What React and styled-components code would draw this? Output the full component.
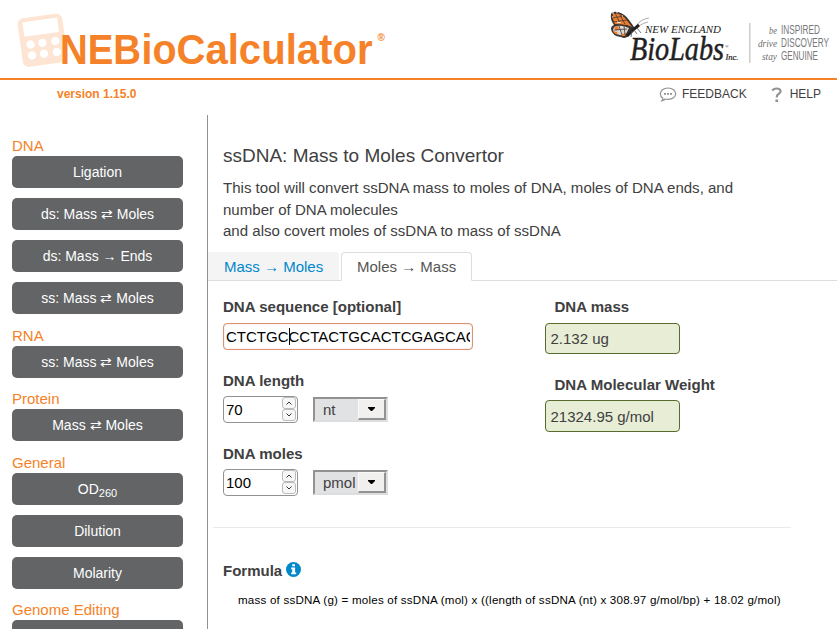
import React from "react";
import styled, { createGlobalStyle, css } from "styled-components";

const Global = createGlobalStyle`
  * { box-sizing: border-box; }
  html, body { margin: 0; background: #fff; overflow: hidden; }
  body { font-family: "Liberation Sans", Arial, sans-serif; font-size: 15px; color: #404041; }
`;
const Page = styled.div`
  width: 837px;
  height: 629px;
  overflow: hidden;
`;
const Header = styled.header`
  height: 80px;
  border-bottom: 2px solid #f58229;
  display: flex;
  justify-content: space-between;
`;
const Art = styled.svg`
  display: block;
  flex: none;
`;
const MetaBar = styled.div`
  height: 35px;
  display: flex;
  align-items: flex-start;
  padding: 6px 16px 0 57px;
`;
const Version = styled.div`
  font: bold 12px/16px "Liberation Sans", Arial, sans-serif;
  color: #f58229;
  margin-right: auto;
`;
const MetaLink = styled.a`
  display: flex;
  align-items: center;
  gap: ${(p) => p.$gap}px;
  margin-left: ${(p) => p.$before || 0}px;
  font-size: 12px;
  line-height: 17px;
  color: #404041;
`;
const Body = styled.div`
  display: flex;
  height: 514px;
`;
const Sidebar = styled.nav`
  width: 208px;
  flex: none;
  border-right: 1px solid #919191;
  padding: 21px 0 0 12px;
  overflow: hidden;
`;
const Group = styled.section`
  width: 171px;
  margin-bottom: ${(p) => p.$after}px;
`;
const GroupTitle = styled.div`
  height: 20px;
  line-height: 20px;
  font-size: 15px;
  color: #f58229;
`;
const Buttons = styled.div`
  display: grid;
  gap: 10px;
`;
const NavButton = styled.a`
  height: 32px;
  border-radius: 5px;
  background: #626466;
  color: #fff;
  font-size: 14px;
  line-height: 32px;
  text-align: center;
  sub { font-size: 11px; line-height: 0; vertical-align: -3px; }
`;
const Main = styled.main`
  flex: 1;
  min-width: 0;
`;
const Title = styled.h1`
  margin: 30px 0 0 15px;
  font-size: 19px;
  line-height: 22px;
  font-weight: normal;
`;
const Intro = styled.p`
  margin: 10px 0 10px 15px;
  font-size: 15.05px;
  line-height: 21.5px;
`;
const Tabs = styled.div`
  height: 29px;
  display: flex;
  border-bottom: 1px solid #ddd;
`;
const Tab = styled.div`
  height: 29px;
  line-height: 29px;
  font-size: 15px;
  white-space: nowrap;
  ${(p) =>
    p.$active
      ? css`
          width: 131px;
          line-height: 27px;
          padding-left: 15px;
          margin-left: 2px;
          border: 1px solid #ddd;
          border-bottom-color: #fff;
          border-radius: 4px 4px 0 0;
          background: #fff;
          color: #555;
        `
      : css`
          width: 131px;
          height: 28px;
          padding-left: 16px;
          border-radius: 0 4px 0 0;
          background: #f4f4f4;
          color: #0088cc;
        `}
`;
const Form = styled.div`
  display: grid;
  grid-template-columns: 322px 200px;
  padding: 16px 0 0 15px;
  height: 246px;
`;
const Label = styled.div`
  height: 20px;
  line-height: 20px;
  font-size: 15.04px;
  font-weight: bold;
  margin-left: ${(p) => p.$indent || 0}px;
`;
const SequenceBox = styled.div`
  width: 250px;
  height: 27px;
  margin: 6px 0 21px;
  padding: 0 2px;
  border: 1px solid #df8f72;
  border-radius: 4px;
  box-shadow: inset 0 0 1px #df8f72;
`;
const SequenceText = styled.div`
  display: flex;
  align-items: center;
  height: 25px;
  font-size: 15px;
  color: #000;
  white-space: nowrap;
  overflow: hidden;
`;
const Caret = styled.i`
  flex: none;
  width: 1px;
  height: 17px;
  margin-right: -1px;
  background: #000;
`;
const FieldRow = styled.div`
  display: flex;
  align-items: center;
  gap: 15px;
  height: 27px;
  margin: 5px 0 21px;
`;
const NumberBox = styled.div`
  width: 75px;
  height: 27px;
  border: 1px solid #929292;
  border-radius: 4px;
  display: flex;
  align-items: center;
  justify-content: space-between;
  padding: 0 1px 0 2px;
  font-size: 15px;
  color: #000;
`;
const Spinner = styled.div`
  display: grid;
`;
const Step = styled.div`
  width: 14px;
  height: 12px;
  border: 1px solid #bbb;
  border-radius: 3px;
  background: #f7f7f7;
  display: grid;
  place-items: center;
`;
const Select = styled.div`
  width: 75px;
  height: 25px;
  border: 2px solid;
  border-color: #929292 #dedede #dedede #929292;
  background: #e0e2e4;
  display: flex;
  justify-content: space-between;
  padding-left: 8px;
  font-size: 15px;
  line-height: 22px;
`;
const SelectArrow = styled.div`
  width: 28px;
  height: 21px;
  border: 1px solid;
  border-color: #f9f9f9 #929292 #929292 #f9f9f9;
  border-right-width: 2px;
  border-bottom-width: 2px;
  background: #f1f0ef;
  display: grid;
  place-items: center;
`;
const Result = styled.div`
  width: 135px;
  height: ${(p) => p.$h}px;
  margin: ${(p) => p.$m};
  border: 1px solid #586b2c;
  border-radius: 4px;
  background: #e7eed5;
  padding: 0 4.500px;
  font-size: 15px;
  line-height: ${(p) => p.$line}px;
`;
const Rule = styled.div`
  height: 1px;
  width: 578px;
  margin-left: 5px;
  background: #eaeaea;
`;
const FormulaTitle = styled.div`
  display: flex;
  align-items: center;
  gap: 4px;
  height: 20px;
  margin: 33px 0 0 15px;
  font-weight: bold;
  font-size: 15px;
`;
const InfoIcon = styled(Art)`
  margin-bottom: 3px;
`;
const FormulaText = styled.div`
  margin: 11px 0 0 30px;
  font-size: 11.6px;
  line-height: 15px;
  letter-spacing: 0.205px;
  color: #000;
  white-space: nowrap;
`;

const CalculatorLogo = () => (
  <Art width="400" height="78" viewBox="0 0 400 78">
    <g transform="rotate(-8 41 40)">
      <rect x="20" y="16" width="45" height="49" rx="6" fill="#fde4d3" />
      <rect x="25" y="20" width="35" height="14.500" fill="#fff" />
      {[43, 54].map((y) =>
        [30, 42, 55].map((x) => <circle key={`${x}-${y}`} cx={x} cy={y} r="4.2" fill="#fff" />)
      )}
    </g>
    <g fontFamily="Liberation Sans, Arial, sans-serif" fontSize="43" fontWeight="bold" fill="#f58229">
      <text x="60" y="64" textLength="81" lengthAdjust="spacingAndGlyphs">NEB</text>
      <text x="141.500" y="64" textLength="35" lengthAdjust="spacingAndGlyphs">io</text>
      <text x="176.500" y="64" textLength="196" lengthAdjust="spacingAndGlyphs">Calculator</text>
    </g>
    <text x="377.500" y="40.500" fontFamily="Liberation Sans, Arial, sans-serif" fontSize="10" fontWeight="bold" fill="#f58229">®</text>
  </Art>
);

const LabsLogo = () => (
  <Art width="237" height="78" viewBox="0 0 237 78">
    <path d="M37 25Q41 19 49 18M39 26Q43 23 48 22" fill="none" stroke="#888" strokeWidth=".7" />
    <path d="M11 14Q12 11 18 12Q25 14 29 20Q33 25 35 29L30 33Q27 40 21 37Q12 36 11 29Q11 26 14 25Q10 20 11 14Z" fill="#3a3431" />
    <path d="M13 14Q19 12 25 18L32 27L27 25Q20 24 15 24Q12 19 13 14Z" fill="#ee7d2d" />
    <path d="M14 27Q20 24 29 28L27 32Q25 36 20 35Q14 34 13 30Z" fill="#ddd8d3" />
    <path d="M14 27l4-1 1 3-3 2zM13 31l4 1 1 3-4-2zM22 34l4-1-1 3h-3z" fill="#ee7d2d" />
    <path d="M15 13l6 12M20 15l5 9M12 18l12-2M13 22l14-2M19 26l3 9M14 30l13-1M24 26l1 9" fill="none" stroke="#433a34" strokeWidth=".8" />
    <path d="M12 13h2M12 17h1M16 12h2M22 16h1M17 22l4 1" stroke="#fff" strokeWidth="1" />
    <path d="M27 36Q30 33 34 29L39 25" fill="none" stroke="#222" strokeWidth="3" />
    <path d="M34 30l3 4M37 28l4 5M32 31l-1 6" fill="none" stroke="#555" strokeWidth=".8" />
    <g fill="#222" fontFamily="Liberation Serif, Times New Roman, serif" fontStyle="italic">
      <text x="45" y="33" fontSize="10.500" textLength="76" lengthAdjust="spacingAndGlyphs">NEW ENGLAND</text>
      <text x="30" y="60" fontSize="34.500" stroke="#222" strokeWidth=".5" textLength="94" lengthAdjust="spacingAndGlyphs">BioLabs</text>
      <text x="125.500" y="60" fontSize="9" stroke="#222" strokeWidth=".2" textLength="13" lengthAdjust="spacingAndGlyphs">Inc.</text>
      <text x="125" y="48" fontSize="5">®</text>
    </g>
    <rect x="149" y="23" width="1.500" height="40" fill="#ccc" />
    <g fill="#6d6e70" fontFamily="Liberation Serif, Times New Roman, serif" fontSize="10.500" fontStyle="italic">
      <text x="169" y="34" textLength="8" lengthAdjust="spacingAndGlyphs">be</text>
      <text x="158" y="47" textLength="19" lengthAdjust="spacingAndGlyphs">drive</text>
      <text x="162" y="60" textLength="15" lengthAdjust="spacingAndGlyphs">stay</text>
    </g>
    <g fill="#77787a" fontFamily="Liberation Sans, Arial, sans-serif" fontSize="12">
      <text x="181" y="34" textLength="39" lengthAdjust="spacingAndGlyphs">INSPIRED</text>
      <text x="181" y="47" textLength="48" lengthAdjust="spacingAndGlyphs">DISCOVERY</text>
      <text x="181" y="60" textLength="37" lengthAdjust="spacingAndGlyphs">GENUINE</text>
    </g>
  </Art>
);

const groups = [
  { title: "DNA", after: 12, items: ["Ligation", "ds: Mass ⇄ Moles", "ds: Mass → Ends", "ss: Mass ⇄ Moles"] },
  { title: "RNA", after: 11, items: ["ss: Mass ⇄ Moles"] },
  { title: "Protein", after: 12, items: ["Mass ⇄ Moles"] },
  { title: "General", after: 11, items: [<>OD<sub>260</sub></>, "Dilution", "Molarity"] },
  { title: "Genome Editing", after: 0, items: [""] },
];

const NumberField = ({ value, unit }) => (
  <FieldRow>
    <NumberBox>
      {value}
      <Spinner>
        <Step><Art width="8" height="6"><path d="M1.500 4.500L4 2l2.500 2.500" fill="none" stroke="#333" /></Art></Step>
        <Step><Art width="8" height="6"><path d="M1.500 1.500L4 4l2.500-2.500" fill="none" stroke="#333" /></Art></Step>
      </Spinner>
    </NumberBox>
    <Select>
      {unit}
      <SelectArrow><Art width="7" height="4"><path d="M0 0h7v1L4 4H3L0 1Z" fill="#000" /></Art></SelectArrow>
    </Select>
  </FieldRow>
);

export default function App() {
  return (
    <Page>
      <Global />
      <Header>
        <CalculatorLogo />
        <LabsLogo />
      </Header>
      <MetaBar>
        <Version>version 1.15.0</Version>
        <MetaLink $gap={5}>
          <Art width="18" height="17" viewBox="0 0 18 17">
            <path d="M9 2C4.500 2 1.300 4.500 1.300 7.800c0 1.800 1 3.400 2.600 4.400-.1 1-.5 1.800-1.100 2.700 1.500-.3 2.600-.9 3.500-1.900.8.200 1.700.3 2.700.3 4.600 0 7.700-2.400 7.700-5.500S13.600 2 9 2Z" fill="none" stroke="#919395" strokeWidth="1.200" />
            <path d="M5 7h2v1.700H5zM8 7h2v1.700H8zM11 7h2v1.700h-2z" fill="#919395" />
          </Art>
          FEEDBACK
        </MetaLink>
        <MetaLink $gap={8} $before={24}>
          <Art width="11" height="17" viewBox="0 0 11 17">
            <path d="M1.200 4.500Q3 2.500 5.500 2.500C10.500 2.500 10.500 6.500 7.500 8Q5.700 9 5.700 11.500" fill="none" stroke="#919395" strokeWidth="2.200" />
            <rect x="4.400" y="13.500" width="2.700" height="2.500" fill="#919395" />
          </Art>
          HELP
        </MetaLink>
      </MetaBar>
      <Body>
        <Sidebar>
          {groups.map((g) => (
            <Group key={g.title} $after={g.after}>
              <GroupTitle>{g.title}</GroupTitle>
              <Buttons>{g.items.map((t, i) => <NavButton key={i}>{t}</NavButton>)}</Buttons>
            </Group>
          ))}
        </Sidebar>
        <Main>
          <Title>ssDNA: Mass to Moles Convertor</Title>
          <Intro>
            This tool will convert ssDNA mass to moles of DNA, moles of DNA ends, and<br />
            number of DNA molecules<br />
            and also covert moles of ssDNA to mass of ssDNA
          </Intro>
          <Tabs>
            <Tab>Mass → Moles</Tab>
            <Tab $active>Moles → Mass</Tab>
          </Tabs>
          <Form>
            <div>
              <Label>DNA sequence [optional]</Label>
              <SequenceBox><SequenceText>CTCTGC<Caret />CCTACTGCACTCGAGCACG</SequenceText></SequenceBox>
              <Label>DNA length</Label>
              <NumberField value="70" unit="nt" />
              <Label>DNA moles</Label>
              <NumberField value="100" unit="pmol" />
            </div>
            <div>
              <Label $indent={9.5}>DNA mass</Label>
              <Result $h={31} $line={29} $m="6px 0 21px">2.132 ug</Result>
              <Label $indent={9.5}>DNA Molecular Weight</Label>
              <Result $h={32} $line={31} $m="5px 0 0">21324.95 g/mol</Result>
            </div>
          </Form>
          <Rule />
          <FormulaTitle>
            Formula
            <InfoIcon width="15" height="15" viewBox="0 0 14 14">
              <circle cx="7" cy="7" r="7" fill="#0088cc" />
              <path d="M5.800 2h2.600v2H5.800zM4.800 5.200h3.700v4.600h1V11.500H4.800V9.800h1V6.800h-1Z" fill="#fff" />
            </InfoIcon>
          </FormulaTitle>
          <FormulaText>mass of ssDNA (g) = moles of ssDNA (mol) x ((length of ssDNA (nt) x 308.97 g/mol/bp) + 18.02 g/mol)</FormulaText>
        </Main>
      </Body>
    </Page>
  );
}
